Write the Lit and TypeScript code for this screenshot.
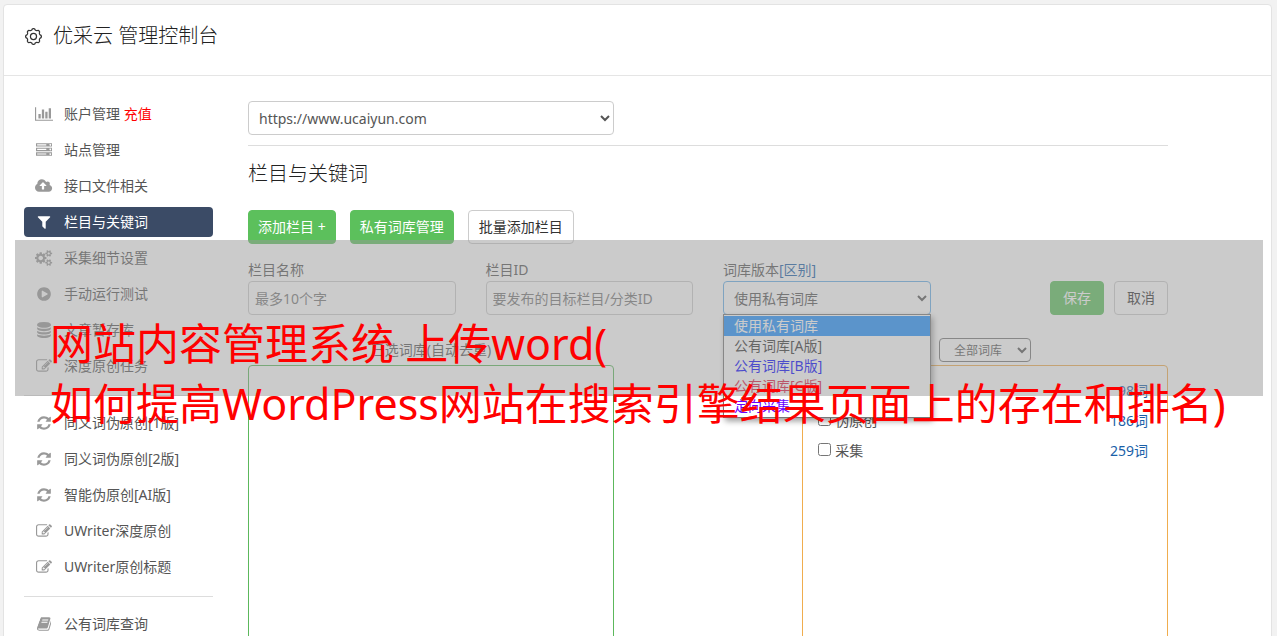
import { LitElement, html, css, svg } from "lit";
import { customElement, state } from "lit/decorators.js";

type Glyph = { box: string; d: string };

const satellite =
  "v140q0 16-149 31-12 27-30 52 51 113 51 138 0 4-4 7-122 71-124 71-8 0-46-47t-52-68q-20 2-30 2t-30-2q-14 21-52 68t-46 47q-2 0-124-71-4-3-4-7 0-25 51-138-18-25-30-52-149-15-149-31v-140q0-16 149-31 13-29 30-52-51-113-51-138 0-4 4-7 4-2 35-20t59-34 30-16q8 0 46 46.5t52 67.5q20-2 30-2t30 2q51-71 92-112l6-2q4 0 124 70 4 3 4 7 0 25-51 138 17 23 30 52 149 15 149 31z";

const glyphs: Record<string, Glyph> = {
  chart: {
    box: "0 0 2048 1792",
    d: "M640 896v512h-256v-512h256zm384-512v1024h-256v-1024h256zm1024 1152v128h-2048v-1536h128v1408h1920zm-640-896v768h-256v-768h256zm384-384v1152h-256v-1152h256z",
  },
  server: {
    box: "0 0 1792 1792",
    d: [1280, 768, 256]
      .map(
        (y) =>
          `M0 ${y - 128}h1792v384h-1792zM128 ${y}v128h1024v-128zM1600 ${y - 32}a96 96 0 1 0 1 0z`
      )
      .join(""),
  },
  cloud: {
    box: "-64 0 1920 1792",
    d: "M1216 864q0-14-9-23l-352-352q-9-9-23-9t-23 9l-351 351q-10 12-10 24 0 14 9 23t23 9h224v352q0 13 9.5 22.5t22.5 9.5h192q13 0 22.5-9.5t9.5-22.5v-352h224q13 0 22.5-9.5t9.5-22.5zm640 288q0 159-112.5 271.5t-271.5 112.5h-1088q-185 0-316.5-131.5t-131.5-316.5q0-130 70-240t188-165q-2-30-2-43 0-212 150-362t362-150q156 0 285.5 87t188.5 231q71-62 166-62 106 0 181 75t75 181q0 76-41 138 130 31 213.5 135.5t83.5 238.5z",
  },
  filter: {
    box: "0 0 1792 1792",
    d: "M1595 295q17 41-14 70l-493 493v742q0 42-39 59-13 5-25 5-27 0-45-19l-256-256q-19-19-19-45v-486l-493-493q-31-29-14-70 17-39 59-39h1280q42 0 59 39z",
  },
  cogs: {
    box: "-64 0 1920 1792",
    d:
      "M832 896q0-106-75-181t-181-75-181 75-75 181 75 181 181 75 181-75 75-181zm768 512q0-52-38-90t-90-38-90 38-38 90q0 53 37.5 90.5t90.5 37.5 90.5-37.5 37.5-90.5zm0-1024q0-52-38-90t-90-38-90 38-38 90q0 53 37.5 90.5t90.5 37.5 90.5-37.5 37.5-90.5zm-384 421v185q0 10-7 19.5t-16 10.5l-155 24q-11 35-32 76 34 48 90 115 7 11 7 20 0 12-7 19-23 30-82.5 89.5t-78.5 59.5q-11 0-21-7l-115-90q-37 19-77 31-11 108-23 155-7 24-30 24h-186q-11 0-20-7.5t-10-17.5l-23-153q-34-10-75-31l-118 89q-7 7-20 7-11 0-21-8-144-133-144-160 0-9 7-19 10-14 41-53t47-61q-23-44-35-82l-152-24q-10-1-17-9.5t-7-19.5v-185q0-10 7-19.5t16-10.5l155-24q11-35 32-76-34-48-90-115-7-11-7-20 0-12 7-20 22-30 82-89t79-59q11 0 21 7l115 90q34-18 77-32 11-108 23-154 7-24 30-24h186q11 0 20 7.5t10 17.5l23 153q34 10 75 31l118-89q8-7 20-7 11 0 21 8 144 133 144 160 0 8-7 19-12 16-42 54t-45 60q23 48 34 82l152 23q10 2 17 10.5t7 19.5z" +
      "M1856 1338" + satellite + "M1856 314" + satellite,
  },
  play: {
    box: "0 0 1792 1792",
    d: "M896 128q209 0 385.5 103t279.5 279.5 103 385.5-103 385.5-279.5 279.5-385.5 103-385.5-103-279.5-279.5-103-385.5 103-385.5 279.5-279.5 385.5-103zm384 823q32-18 32-55t-32-55l-544-320q-31-19-64-1-32 19-32 56v640q0 37 32 56 16 8 32 8 17 0 32-9z",
  },
  database: {
    box: "0 0 1792 1792",
    d: "M896 768q237 0 443-43t325-127v170q0 69-103 128t-280 93.5-385 34.5-385-34.5-280-93.5-103-128v-170q119 84 325 127t443 43zm0 768q237 0 443-43t325-127v170q0 69-103 128t-280 93.5-385 34.5-385-34.5-280-93.5-103-128v-170q119 84 325 127t443 43zm0-384q237 0 443-43t325-127v170q0 69-103 128t-280 93.5-385 34.5-385-34.5-280-93.5-103-128v-170q119 84 325 127t443 43zm0-1152q208 0 385 34.5t280 93.5 103 128v128q0 69-103 128t-280 93.5-385 34.5-385-34.5-280-93.5-103-128v-128q0-69 103-128t280-93.5 385-34.5z",
  },
  edit: {
    box: "0 0 1792 1792",
    d: "M888 1184l116-116-152-152-116 116v56h96v96h56zm440-720q-16-16-33 1l-350 350q-17 17-1 33t33-1l350-350q17-17 1-33zm80 594v190q0 119-84.5 203.5t-203.5 84.5h-832q-119 0-203.5-84.5t-84.5-203.5v-832q0-119 84.5-203.5t203.5-84.5h832q63 0 117 25 15 7 18 23 3 17-9 29l-49 49q-14 14-32 8-23-6-45-6h-832q-66 0-113 47t-47 113v832q0 66 47 113t113 47h832q66 0 113-47t47-113v-126q0-13 9-22l64-64q15-15 35-7t20 29zm-96-738l288 288-672 672h-288v-288zm444 132l-92 92-288-288 92-92q28-28 68-28t68 28l152 152q28 28 28 68t-28 68z",
  },
  refresh: {
    box: "0 0 1792 1792",
    d: "M1639 1056q0 5-1 7-64 268-268 434.5t-478 166.5q-146 0-282.5-55t-243.5-157l-129 129q-19 19-45 19t-45-19-19-45v-448q0-26 19-45t45-19h448q26 0 45 19t19 45-19 45l-137 137q71 66 161 102t187 36q134 0 250-65t186-179q11-17 53-117 8-23 30-23h192q13 0 22.5 9.5t9.5 22.5zm25-800v448q0 26-19 45t-45 19h-448q-26 0-45-19t-19-45 19-45l138-138q-148-137-349-137-134 0-250 65t-186 179q-11 17-53 117-8 23-30 23h-199q-13 0-22.5-9.5t-9.5-22.5v-7q65-268 270-434.5t480-166.5q146 0 284 55.5t245 156.5l130-129q19-19 45-19t45 19 19 45z",
  },
  book: {
    box: "0 0 1664 1792",
    d: "M1639 478q40 57 18 129l-275 906q-19 64-76.5 107.5t-122.5 43.5h-923q-77 0-148.5-53.5t-99.5-131.5q-24-67-2-127 0-4 3-27t4-37q1-8-3-21.5t-3-19.5q2-11 8-21t16.5-23.5 16.5-23.5q23-38 45-91.5t30-91.5q3-10 .5-30t-.5-28q3-11 17-28t17-23q21-36 42-92t25-90q1-9-2.5-32t.5-28q4-13 22-30.5t22-22.5q19-26 42.5-84.5t27.5-96.5q1-8-3-25.5t-2-26.5q2-8 9-18t18-23 17-21q8-12 16.5-30.5t15-35 16-36 19.5-32 26.5-23.5 36-11.5 47.5 5.5l-1 3q38-9 51-9h761q74 0 114 56t18 130l-274 906q-36 119-71.5 153.5t-128.5 34.5h-869q-27 0-38 15-11 16-1 43 24 70 144 70h923q29 0 56-15.5t35-41.5l300-987q7-22 5-57 38 15 59 43zm-1064 2q-4 13 2 22.5t20 9.5h608q13 0 25.5-9.5t16.5-22.5l21-64q4-13-2-22.5t-20-9.5h-608q-13 0-25.5 9.5t-16.5 22.5zm-83 256q-4 13 2 22.5t20 9.5h608q13 0 25.5-9.5t16.5-22.5l21-64q4-13-2-22.5t-20-9.5h-608q-13 0-25.5 9.5t-16.5 22.5z",
  },
};

type Entry = { icon: string; text: string; extra?: string; active?: boolean };

const menu: Entry[][] = [
  [
    { icon: "chart", text: "账户管理", extra: "充值" },
    { icon: "server", text: "站点管理" },
    { icon: "cloud", text: "接口文件相关" },
    { icon: "filter", text: "栏目与关键词", active: true },
    { icon: "cogs", text: "采集细节设置" },
    { icon: "play", text: "手动运行测试" },
    { icon: "database", text: "文章暂存库" },
    { icon: "edit", text: "深度原创任务" },
  ],
  [
    { icon: "refresh", text: "同义词伪原创[1版]" },
    { icon: "refresh", text: "同义词伪原创[2版]" },
    { icon: "refresh", text: "智能伪原创[AI版]" },
    { icon: "edit", text: "UWriter深度原创" },
    { icon: "edit", text: "UWriter原创标题" },
  ],
  [{ icon: "book", text: "公有词库查询" }],
];

// Outline of the header gear: a circle whose radius swells once per tooth.
const gearOutline = (() => {
  const pts: string[] = [];
  for (let i = 0; i < 160; i++) {
    const a = (i / 160) * Math.PI * 2;
    const w = Math.cos(8 * a);
    const r = 7.6 + 0.7 * Math.sign(w) * Math.pow(Math.abs(w), 0.6);
    pts.push(`${(10 + r * Math.cos(a)).toFixed(2)} ${(10 + r * Math.sin(a)).toFixed(2)}`);
  }
  return `M${pts.join("L")}Z`;
})();

@customElement("app-root")
export class AppRoot extends LitElement {
  @state() private libraries = [
    { name: "", count: 98 },
    { name: "伪原创", count: 186 },
    { name: "采集", count: 259 },
  ];

  static styles = css`
    :host {
      display: block;
      position: relative;
      height: 100vh;
      overflow: hidden;
      box-sizing: border-box;
      padding: 4px 5px 0 3px;
      background: #f2f2f2;
      color: #555;
      font: 14px/20px "Noto Sans", "Noto Sans CJK SC", sans-serif;
    }
    * {
      box-sizing: border-box;
    }
    a {
      color: inherit;
      text-decoration: none;
    }
    .card {
      min-height: 100vh;
      background: #fff;
      border: 1px solid #e3e3e3;
      border-radius: 4px;
    }
    .head {
      display: flex;
      align-items: center;
      gap: 10px;
      height: 71px;
      padding: 0 20px 8px;
      border-bottom: 1px solid #e5e5e5;
      color: #333;
    }
    .head svg {
      width: 19px;
      height: 19px;
      fill: none;
      stroke: #333;
      stroke-width: 1.3;
    }
    h1,
    h2 {
      margin: 0;
      font-size: 20px;
      line-height: 28px;
      font-weight: 300;
      color: #222;
    }
    .body {
      display: grid;
      grid-template-columns: 189px minmax(0, 1fr);
      column-gap: 35px;
      padding: 23px 103px 0 20px;
    }
    main {
      padding-top: 2px;
    }
    .item {
      display: flex;
      align-items: center;
      gap: 10px;
      height: 30px;
      margin-bottom: 6px;
      padding: 0 10px;
      border-radius: 4px;
      white-space: nowrap;
    }
    .item.active {
      background: #3b4b66;
      color: #fff;
    }
    .icon {
      display: flex;
      justify-content: center;
      width: 20px;
      color: #999;
    }
    .icon svg {
      height: 16px;
      fill: currentColor;
      fill-rule: evenodd;
    }
    .active .icon {
      color: #fff;
    }
    .extra {
      color: #f00;
    }
    .rule {
      height: 1px;
      margin: 14px 0 12px;
      border: 0;
      background: #ddd;
    }
    .row {
      display: grid;
      grid-template-columns: repeat(12, minmax(0, 1fr));
      column-gap: 30px;
    }
    .s3 {
      grid-column: span 3;
    }
    .s5 {
      grid-column: span 5;
    }
    .right {
      grid-column: 8 / span 5;
    }
    .control {
      display: block;
      width: 100%;
      height: 34px;
      padding: 6px;
      border: 1px solid #ccc;
      border-radius: 4px;
      background: #fff;
      color: #555;
      font: inherit;
      outline: 0;
    }
    .control::placeholder {
      color: #777;
      opacity: 1;
    }
    .focus {
      border-color: #66afe9;
    }
    .line {
      height: 1px;
      margin: 10px 0 14px;
      border: 0;
      background: #ddd;
    }
    .actions {
      display: flex;
      gap: 14px;
      margin: 22px 0 16px;
    }
    .btn {
      height: 34px;
      padding: 0 10px;
      border: 1px solid #ccc;
      border-radius: 4px;
      background: #fff;
      color: #333;
      font: inherit;
      white-space: nowrap;
    }
    .btn.green {
      padding: 0 9px;
      border-color: #5cc05c;
      background: #5cc05c;
      color: #fff;
    }
    .field {
      position: relative;
    }
    .field label {
      display: block;
      margin-bottom: 1px;
    }
    .link {
      color: #1a5fa8;
    }
    .ends {
      display: flex;
      justify-content: flex-end;
      align-items: flex-end;
      gap: 10px;
    }
    .ends .btn {
      width: 54px;
      padding: 0;
    }
    .list {
      position: absolute;
      z-index: 2;
      top: 54px;
      left: 0;
      right: 0;
      margin: 0;
      padding: 1px 0;
      list-style: none;
      background: #fff;
      border: 1px solid #777;
      box-shadow: 2px 3px 6px rgba(0, 0, 0, 0.4);
      color: #333;
    }
    .list li {
      padding: 0 10px;
      line-height: 20px;
    }
    .list .on {
      background: #1e90ff;
      color: #fff;
    }
    .list .b {
      color: #00f;
    }
    .list .c {
      color: #dc143c;
    }
    .list .d {
      color: #6a00ff;
    }
    .boxes {
      margin-top: 20px;
    }
    .cap {
      display: flex;
      align-items: center;
      justify-content: center;
      height: 30px;
    }
    .small {
      width: 92px;
      height: 24px;
      padding: 0 10px;
      border: 1px solid #767676;
      border-radius: 4px;
      background: #fff;
      color: #555;
      font: inherit;
      font-size: 12px;
    }
    .box {
      height: 400px;
      border: 1px solid #5cb85c;
      border-radius: 4px;
    }
    .box.orange {
      padding: 10px 19px 0 15px;
      border-color: #f0ad4e;
    }
    .lib {
      display: flex;
      justify-content: space-between;
      height: 30px;
    }
    .lib label {
      display: flex;
      align-items: flex-start;
      gap: 4px;
      line-height: 30px;
    }
    .lib .link {
      line-height: 30px;
    }
    .lib input {
      width: 13px;
      height: 13px;
      margin: 7px 0 0;
    }
    .banner {
      position: absolute;
      z-index: 3;
      top: 240px;
      left: 15px;
      right: 14px;
      height: 156px;
      padding: 74px 0 0 35px;
      background: rgba(151, 151, 151, 0.5);
      color: #f00;
      font-size: 43px;
      line-height: 60px;
      white-space: nowrap;
      pointer-events: none;
    }
  `;

  private icon(name: string) {
    const g = glyphs[name];
    return html`<span class="icon"
      ><svg viewBox=${g.box} aria-hidden="true">${svg`<path d=${g.d}></path>`}</svg></span
    >`;
  }

  render() {
    return html`
      <div class="card">
        <header class="head">
          <svg viewBox="0 0 20 20" aria-hidden="true">
            <path d=${gearOutline}></path>
            <circle cx="10" cy="10" r="3.2"></circle>
          </svg>
          <h1>优采云 管理控制台</h1>
        </header>
        <div class="body">
          <nav>
            ${menu.map(
              (group, i) => html`
                ${i ? html`<hr class="rule" />` : ""}
                ${group.map(
                  (e) => html`<a class="item ${e.active ? "active" : ""}" href="#"
                    >${this.icon(e.icon)}<span
                      >${e.text}${e.extra
                        ? html` <span class="extra">${e.extra}</span>`
                        : ""}</span
                    ></a
                  >`
                )}
              `
            )}
          </nav>
          <main>
            <div class="row">
              <div class="s5">
                <select class="control" aria-label="站点">
                  <option>https://www.ucaiyun.com</option>
                </select>
              </div>
            </div>
            <hr class="line" />
            <h2>栏目与关键词</h2>
            <div class="actions">
              <button class="btn green">添加栏目 +</button>
              <button class="btn green">私有词库管理</button>
              <button class="btn">批量添加栏目</button>
            </div>
            <div class="row">
              <div class="field s3">
                <label for="name">栏目名称</label>
                <input id="name" class="control" placeholder="最多10个字" />
              </div>
              <div class="field s3">
                <label for="cid">栏目ID</label>
                <input id="cid" class="control" placeholder="要发布的目标栏目/分类ID" />
              </div>
              <div class="field s3">
                <label for="ver">词库版本<a class="link" href="#">[区别]</a></label>
                <select id="ver" class="control focus">
                  <option>使用私有词库</option>
                </select>
                <ul class="list">
                  <li class="on">使用私有词库</li>
                  <li>公有词库[A版]</li>
                  <li class="b">公有词库[B版]</li>
                  <li class="c">公有词库[C版]</li>
                  <li class="d">定向采集</li>
                </ul>
              </div>
              <div class="ends s3">
                <button class="btn green">保存</button>
                <button class="btn">取消</button>
              </div>
            </div>
            <div class="row boxes">
              <section class="s5">
                <div class="cap">已选词库(自动去重)</div>
                <div class="box"></div>
              </section>
              <section class="right">
                <div class="cap">
                  <select class="small" aria-label="词库筛选">
                    <option>全部词库</option>
                  </select>
                </div>
                <div class="box orange">
                  ${this.libraries.map(
                    (l) => html`<div class="lib">
                      <label><input type="checkbox" aria-label=${l.name || "词库"} />${l.name}</label>
                      <a class="link" href="#">${l.count}词</a>
                    </div>`
                  )}
                </div>
              </section>
            </div>
          </main>
        </div>
      </div>
      <div class="banner">
        <div>网站内容管理系统 上传word(</div>
        <div>如何提高WordPress网站在搜索引擎结果页面上的存在和排名)</div>
      </div>
    `;
  }
}
